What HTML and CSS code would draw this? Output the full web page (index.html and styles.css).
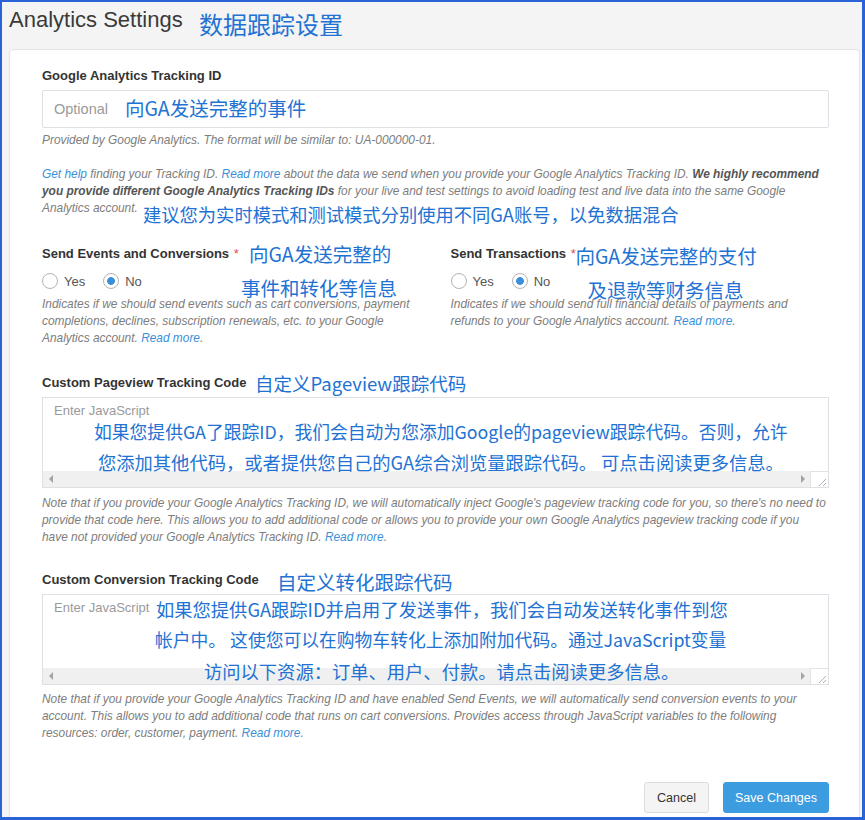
FILE: index.html
```html
<!DOCTYPE html>
<html lang="en">
<head>
<meta charset="utf-8">
<title>Analytics Settings</title>
<link rel="stylesheet" href="styles.css">
</head>
<body>
<div class="frame">
  <header class="page-head">
    <h1 class="page-title">Analytics Settings</h1>
    <span class="cn cn-title">数据跟踪设置</span>
  </header>

  <form class="card">
    <div class="field">
      <label class="label" for="ga-id">Google Analytics Tracking ID</label>
      <input class="text-input" id="ga-id" type="text" placeholder="Optional">
      <p class="help">Provided by Google Analytics. The format will be similar to: UA-000000-01.</p>
      <p class="help help-para"><a href="#">Get help</a> finding your Tracking ID. <a href="#">Read more</a> about the data we send when you provide your Google Analytics Tracking ID. <strong>We highly recommend you provide different Google Analytics Tracking IDs</strong> for your live and test settings to avoid loading test and live data into the same Google Analytics account.</p>
      <span class="cn cn-big cn-ga">向GA发送完整的事件</span>
      <span class="cn cn-advice">建议您为实时模式和测试模式分别使用不同GA账号，以免数据混合</span>
    </div>

    <div class="field two-col">
      <div class="col">
        <div class="label">Send Events and Conversions <span class="req">*</span></div>
        <div class="radios">
          <label class="radio"><input type="radio" name="events">Yes</label>
          <label class="radio"><input type="radio" name="events" checked>No</label>
        </div>
        <p class="help">Indicates if we should send events such as cart conversions, payment completions, declines, subscription renewals, etc. to your Google Analytics account. <a href="#">Read more</a>.</p>
        <span class="cn cn-big cn-ev1">向GA发送完整的</span>
        <span class="cn cn-big cn-ev2">事件和转化等信息</span>
      </div>
      <div class="col">
        <div class="label">Send Transactions <span class="req">*</span></div>
        <div class="radios">
          <label class="radio"><input type="radio" name="tx">Yes</label>
          <label class="radio"><input type="radio" name="tx" checked>No</label>
        </div>
        <p class="help">Indicates if we should send full financial details of payments and refunds to your Google Analytics account. <a href="#">Read more</a>.</p>
        <span class="cn cn-big cn-tx1">向GA发送完整的支付</span>
        <span class="cn cn-big cn-tx2">及退款等财务信息</span>
      </div>
    </div>

    <div class="field field-code">
      <label class="label" for="pv-code">Custom Pageview Tracking Code</label>
      <span class="cn cn-mid cn-pv">自定义Pageview跟踪代码</span>
      <div class="code">
        <textarea id="pv-code" class="code-input" placeholder="Enter JavaScript"></textarea>
        <div class="hscroll">
          <span class="arr arr-l"></span><span class="track"></span><span class="arr arr-r"></span>
          <span class="grip"><svg width="17" height="16" viewBox="0 0 17 16"><path d="M15 7 L8 14 M15 11 L12 14" stroke="#b0b0b0" stroke-width="1" fill="none"/></svg></span>
        </div>
        <div class="code-notes clip">
          <span class="cn cn-pv1">如果您提供GA了跟踪ID，我们会自动为您添加Google的pageview跟踪代码。否则，允许</span>
          <span class="cn cn-pv2">您添加其他代码，或者提供您自己的GA综合浏览量跟踪代码。 可点击阅读更多信息。</span>
        </div>
      </div>
      <p class="help">Note that if you provide your Google Analytics Tracking ID, we will automatically inject Google's pageview tracking code for you, so there's no need to provide that code here. This allows you to add additional code or allows you to provide your own Google Analytics pageview tracking code if you have not provided your Google Analytics Tracking ID. <a href="#">Read more</a>.</p>
    </div>

    <div class="field field-code">
      <label class="label" for="cv-code">Custom Conversion Tracking Code</label>
      <span class="cn cn-big cn-cv">自定义转化跟踪代码</span>
      <div class="code">
        <textarea id="cv-code" class="code-input" placeholder="Enter JavaScript"></textarea>
        <div class="hscroll">
          <span class="arr arr-l"></span><span class="track"></span><span class="arr arr-r"></span>
          <span class="grip"><svg width="17" height="16" viewBox="0 0 17 16"><path d="M15 7 L8 14 M15 11 L12 14" stroke="#b0b0b0" stroke-width="1" fill="none"/></svg></span>
        </div>
        <div class="code-notes">
          <span class="cn cn-cv1">如果您提供GA跟踪ID并启用了发送事件，我们会自动发送转化事件到您</span>
          <span class="cn cn-cv2">帐户中。 这使您可以在购物车转化上添加附加代码。通过JavaScript变量</span>
          <span class="cn cn-cv3">访问以下资源：订单、用户、付款。请点击阅读更多信息。</span>
        </div>
      </div>
      <p class="help">Note that if you provide your Google Analytics Tracking ID and have enabled Send Events, we will automatically send conversion events to your account. This allows you to add additional code that runs on cart conversions. Provides access through JavaScript variables to the following resources: order, customer, payment. <a href="#">Read more</a>.</p>
    </div>

    <div class="actions">
      <button type="button" class="btn btn-cancel">Cancel</button>
      <button type="submit" class="btn btn-save">Save Changes</button>
    </div>
  </form>
</div>
</body>
</html>
```

FILE: styles.css
```css
* { box-sizing: border-box; }
html, body { margin: 0; padding: 0; background: #fff; }
body { font-family: "Liberation Sans", Arial, sans-serif; color: #333; }

.frame {
  width: 865px;
  height: 820px;
  border-style: solid;
  border-color: #2a63d8;
  border-width: 2px 3px 3px 2px;
  background: #f4f4f4;
  overflow: hidden;
}

.page-head {
  position: relative;
  height: 47px;
  padding: 4px 0 0 7px;
}
.page-title {
  margin: 0;
  font-size: 22px;
  line-height: 27px;
  font-weight: normal;
  color: #3a3a3a;
}

.cn {
  position: absolute;
  font-family: "Noto Sans CJK SC", "Noto Sans", sans-serif;
  color: #2272d3;
  font-size: 18px;
  line-height: 1;
  white-space: nowrap;
}
.cn-big { font-size: 19.5px; }
.cn-mid { font-size: 18.5px; }
.cn-title { font-size: 24px; left: 197px; top: 10px; }

.card {
  margin: 0 2px 0 7px;
  background: #fff;
  border: 1px solid #e4e4e4;
  border-radius: 4px;
  padding: 17px 30px 40px 32px;
}

.field { position: relative; }
.two-col {
  display: grid;
  grid-template-columns: 1fr 1fr;
  column-gap: 30px;
  margin-top: 28px;
}
.field-code { margin-top: 27px; }
.field-code + .field-code { margin-top: 25px; }
.col { position: relative; }

.label {
  display: block;
  font-size: 13px;
  font-weight: bold;
  line-height: 18px;
  color: #333;
  margin-bottom: 5px;
}
.req { color: #d9534f; font-weight: normal; margin-left: 1px; }

.text-input {
  display: block;
  width: 100%;
  height: 38px;
  border: 1px solid #dfdfe6;
  border-radius: 2px;
  padding: 0 11px;
  font-family: inherit;
  font-size: 14.5px;
  color: #333;
  outline: none;
}
.text-input::placeholder { color: #9a9a9a; }

.help {
  margin: 4px 0 0;
  font-size: 11.9px;
  font-style: italic;
  line-height: 17px;
  color: #7d7d7d;
}
.help-para { margin-top: 17px; }
.help strong { color: #555; }
.help a { color: #3a8fd8; text-decoration: none; }

.cn-ga { left: 83px; top: 31px; }
.cn-advice { left: 101px; top: 138px; font-size: 18.3px; }

.radios {
  display: flex;
  align-items: center;
  height: 20px;
  margin-top: 8px;
  font-size: 13px;
  color: #555;
}
.radio { display: flex; align-items: center; margin-right: 18px; }
.radio input {
  appearance: none;
  -webkit-appearance: none;
  width: 16px;
  height: 16px;
  margin: 0 6px 0 0;
  border: 1px solid #b3b3b3;
  border-radius: 50%;
  background: #fff;
}
.radio input:checked {
  background: radial-gradient(circle, #3a8fdb 0 3.5px, #fff 4.2px);
}
.col .help { margin-top: 5px; }

.cn-ev1 { left: 207px; top: -1px; }
.cn-ev2 { left: 199px; top: 33px; }
.cn-tx1 { left: 125px; top: 1px; }
.cn-tx2 { left: 137px; top: 35px; }

.code {
  position: relative;
  border: 1px solid #dfdfe6;
  height: 91px;
  display: flex;
  flex-direction: column;
}
.code-input {
  display: block;
  height: 73px;
  width: 100%;
  border: none;
  resize: none;
  padding: 5px 11px;
  font-family: inherit;
  font-size: 13px;
  line-height: 16px;
  color: #333;
  outline: none;
  overflow: hidden;
}
.code-input::placeholder { color: #9a9a9a; }

.hscroll {
  display: flex;
  align-items: center;
  height: 16px;
  background: #f0f0f0;
}
.arr { width: 0; height: 0; border-top: 4px solid transparent; border-bottom: 4px solid transparent; }
.arr-l { border-right: 4px solid #a3a3a3; margin-left: 6px; }
.arr-r { border-left: 4px solid #a3a3a3; margin-right: 5px; }
.track { flex: 1; }
.grip {
  width: 18px;
  height: 16px;
  background: #fff;
  border-left: 1px solid #e2e2e2;
  border-top: 1px solid #e2e2e2;
  display: block;
}
.grip svg { display: block; }

.code-notes { position: absolute; left: 0; top: 0; right: 0; height: 74px; }
.code-notes.clip { overflow: hidden; }
.cn-pv { left: 213px; top: 0; }
.cn-pv1 { left: 51px; top: 25px; font-size: 17.8px; }
.cn-pv2 { left: 55px; top: 55px; font-size: 18.3px; }
.cn-cv { left: 235px; top: 1px; }
.cn-cv1 { left: 113px; top: 5px; font-size: 18.3px; }
.cn-cv2 { left: 112px; top: 36px; font-size: 17.8px; }
.cn-cv3 { left: 161px; top: 67px; font-size: 18.3px; }

.field-code .help { margin-top: 7px; margin-right: 2px; }
.field-code + .field-code .help { margin-top: 6px; }

.actions {
  display: flex;
  justify-content: flex-end;
  gap: 14px;
  margin-top: 40px;
}
.btn {
  height: 31px;
  padding: 0 12px;
  font-family: inherit;
  font-size: 12.5px;
  border-radius: 3px;
  border: 1px solid;
}
.btn-cancel { background: #f4f4f4; border-color: #dcdcdc; color: #333; }
.btn-save { background: #3c9ce0; border-color: #3c9ce0; color: #fff; padding: 0 11px; }
```
